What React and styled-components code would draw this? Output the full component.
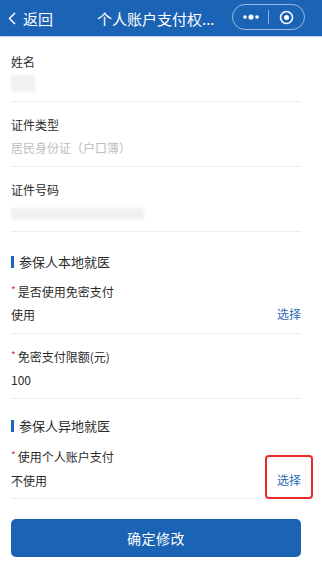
import React from 'react';
import styled, { createGlobalStyle } from 'styled-components';

const GlobalStyle = createGlobalStyle`
  html, body {
    margin: 0;
    padding: 0;
    background: #fff;
    font-family: "Noto Sans CJK SC", "Noto Sans", sans-serif;
  }
`;

const Page = styled.div`
  width: 322px;
  min-height: 576px;
  background: #fff;
`;

const Header = styled.div`
  height: 36px;
  background: #1b63b5;
  border-bottom: 1px solid #c4d3e6;
  display: flex;
  align-items: center;
  padding-left: 8px;
  color: #fff;
`;

const Back = styled.div`
  display: flex;
  align-items: center;
  gap: 7px;
  font-size: 15px;
  width: 85px;
`;

const Title = styled.div`
  font-size: 15px;
  margin-left: 4px;
  width: 135px;
  white-space: nowrap;
`;

const Capsule = styled.div`
  width: 71px;
  height: 24px;
  border: 1px solid rgba(255, 255, 255, 0.55);
  border-radius: 13px;
  display: flex;
  align-items: center;
  margin-top: -2px;
`;

const CapsuleHalf = styled.div`
  flex: 1;
  display: flex;
  align-items: center;
  justify-content: center;
`;

const CapsuleSep = styled.div`
  width: 1px;
  height: 14px;
  background: rgba(255, 255, 255, 0.5);
`;

const Content = styled.div`
  padding: 15px 21px 0 11px;
`;

const Field = styled.div`
  padding: ${p => p.$top ?? 13}px 0 ${p => p.$bottom ?? 9}px;
  border-bottom: 1px solid #ededed;
`;

const Label = styled.div`
  font-size: 12px;
  line-height: 20px;
  color: #2b2b2b;
  display: flex;
  align-items: flex-start;
`;

const Star = styled.span`
  color: #e0302e;
  font-size: 10px;
  line-height: 15px;
  margin-right: 2px;
`;

const ValueRow = styled.div`
  margin-top: ${p => p.$gap ?? 2}px;
  height: 20px;
  display: flex;
  align-items: center;
  justify-content: space-between;
  font-size: 12px;
  color: #2b2b2b;
`;

const Placeholder = styled.span`
  color: #bdbdbd;
`;

const Blur = styled.div`
  width: ${p => p.$w}px;
  height: ${p => p.$h}px;
  background: #f1f1f1;
  filter: blur(1.5px);
  margin-top: 3px;
`;

const Pick = styled.span`
  display: block;
  line-height: 20px;
  color: #2a6bb8;
  position: relative;
`;

const Highlight = styled.span`
  position: absolute;
  left: -12px;
  top: -15px;
  width: 48px;
  height: 44px;
  box-sizing: border-box;
  border: 2px solid #ea2b2b;
  border-radius: 4px;
`;

const Section = styled.div`
  padding-top: ${p => p.$top}px;
  display: flex;
  align-items: center;
  gap: 5px;
  font-size: 13px;
  line-height: 20px;
  color: #2b2b2b;
`;

const SectionBar = styled.span`
  width: 3px;
  height: 12px;
  background: #1a66c0;
`;

const Submit = styled.button`
  margin-top: 20px;
  width: 100%;
  height: 38px;
  border: none;
  border-radius: 5px;
  background: #1b63b5;
  color: #fff;
  font-family: inherit;
  font-size: 14px;
  letter-spacing: 0.5px;
`;

export default function App() {
  return (
    <Page>
      <GlobalStyle />
      <Header>
        <Back>
          <svg width="8" height="13" viewBox="0 0 8 13">
            <path d="M7 1 L1.5 6.5 L7 12" fill="none" stroke="#fff" strokeWidth="1.5" />
          </svg>
          返回
        </Back>
        <Title>个人账户支付权...</Title>
        <Capsule>
          <CapsuleHalf>
            <svg width="18" height="6" viewBox="0 0 18 6">
              <circle cx="3" cy="3" r="1.8" fill="#fff" />
              <circle cx="9" cy="3" r="2.6" fill="#fff" />
              <circle cx="15" cy="3" r="1.8" fill="#fff" />
            </svg>
          </CapsuleHalf>
          <CapsuleSep />
          <CapsuleHalf>
            <svg width="15" height="15" viewBox="0 0 15 15">
              <circle cx="7.5" cy="7.5" r="6" fill="none" stroke="#fff" strokeWidth="1.6" />
              <circle cx="7.5" cy="7.5" r="2.5" fill="#fff" />
            </svg>
          </CapsuleHalf>
        </Capsule>
      </Header>

      <Content>
        <Field $top={0}>
          <Label>姓名</Label>
          <Blur $w={24} $h={17} />
        </Field>

        <Field>
          <Label>证件类型</Label>
          <ValueRow>
            <Placeholder>居民身份证（户口簿）</Placeholder>
          </ValueRow>
        </Field>

        <Field>
          <Label>证件号码</Label>
          <ValueRow>
            <Blur $w={133} $h={12} />
          </ValueRow>
        </Field>

        <Section $top={20}>
          <SectionBar />
          参保人本地就医
        </Section>

        <Field $top={10}>
          <Label><Star>*</Star>是否使用免密支付</Label>
          <ValueRow>
            使用
            <Pick>选择</Pick>
          </ValueRow>
        </Field>

        <Field>
          <Label><Star>*</Star>免密支付限额(元)</Label>
          <ValueRow>100</ValueRow>
        </Field>

        <Section $top={17}>
          <SectionBar />
          参保人异地就医
        </Section>

        <Field $top={11} $bottom={8}>
          <Label><Star>*</Star>使用个人账户支付</Label>
          <ValueRow $gap={3}>
            不使用
            <Pick>
              选择
              <Highlight />
            </Pick>
          </ValueRow>
        </Field>

        <Submit>确定修改</Submit>
      </Content>
    </Page>
  );
}
